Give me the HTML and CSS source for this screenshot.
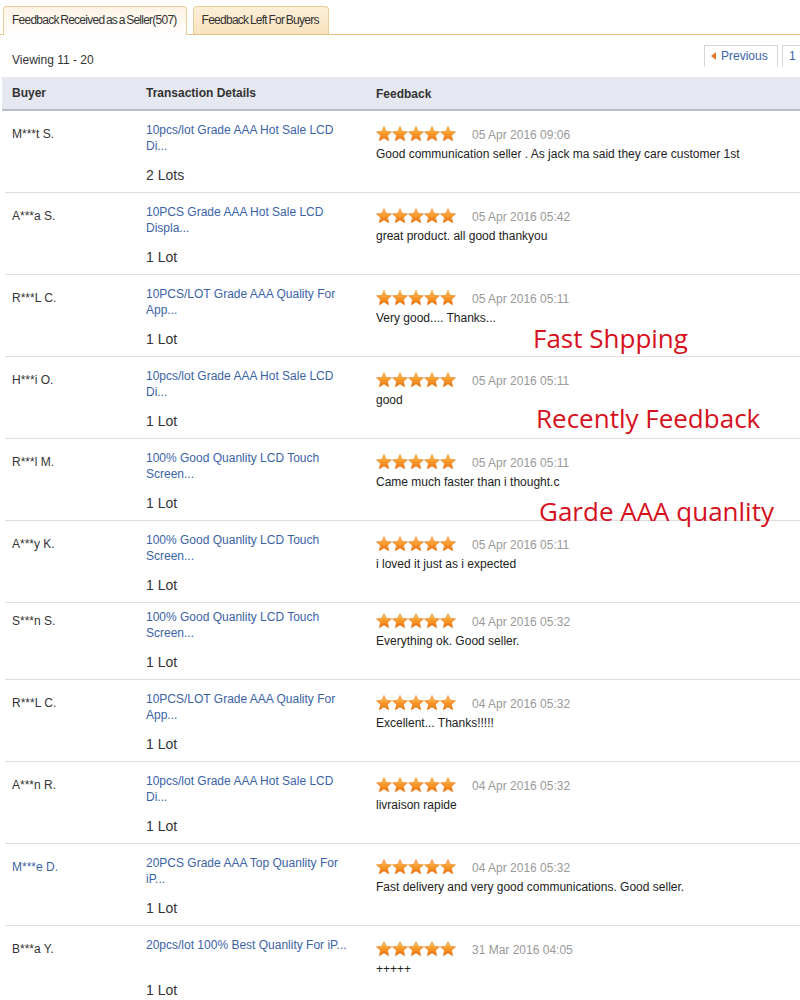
FILE: index.html
```html
<!DOCTYPE html>
<html>
<head>
<meta charset="utf-8">
<link rel="stylesheet" href="styles.css">
</head>
<body>
<svg class="defs" width="0" height="0" aria-hidden="true">
  <defs>
    <linearGradient id="sg" x1="0" y1="0" x2="0" y2="1">
      <stop offset="0" stop-color="#ffc35c"/>
      <stop offset="0.5" stop-color="#f99a2c"/>
      <stop offset="1" stop-color="#ea6f0e"/>
    </linearGradient>
    <symbol id="star" viewBox="0 0 16 16">
      <polygon points="8,0.4 10.2,5.3 15.6,5.8 11.5,9.4 12.8,14.9 8,12 3.2,14.9 4.5,9.4 0.4,5.8 5.8,5.3" fill="url(#sg)" stroke="#e07a1a" stroke-width="0.5"/>
    </symbol>
    <symbol id="stars" viewBox="0 0 80 16">
      <use href="#star" x="0" y="0" width="16" height="16"/>
      <use href="#star" x="16" y="0" width="16" height="16"/>
      <use href="#star" x="32" y="0" width="16" height="16"/>
      <use href="#star" x="48" y="0" width="16" height="16"/>
      <use href="#star" x="64" y="0" width="16" height="16"/>
    </symbol>
  </defs>
</svg>

<div class="tabs">
  <div class="tab active">Feedback Received as a Seller(507)</div>
  <div class="tab">Feedback Left For Buyers</div>
</div>

<div class="toolbar">
  <span class="viewing">Viewing 11 - 20</span>
  <div class="pager">
    <span class="pbtn prev"><span class="tri"></span>Previous</span>
    <span class="pbtn num">1</span>
  </div>
</div>

<div class="table">
  <div class="thead">
    <div class="c1">Buyer</div>
    <div class="c2">Transaction Details</div>
    <div class="c3">Feedback</div>
  </div>

  <div class="row">
    <div class="c1 buyer">M***t S.</div>
    <div class="c2"><a class="prod">10pcs/lot Grade AAA Hot Sale LCD Di...</a><div class="lot">2 Lots</div></div>
    <div class="c3"><div class="rate"><svg class="stars"><use href="#stars"/></svg><span class="date">05 Apr 2016 09:06</span></div><div class="comment">Good communication seller . As jack ma said they care customer 1st</div></div>
  </div>

  <div class="row">
    <div class="c1 buyer">A***a S.</div>
    <div class="c2"><a class="prod">10PCS Grade AAA Hot Sale LCD Displa...</a><div class="lot">1 Lot</div></div>
    <div class="c3"><div class="rate"><svg class="stars"><use href="#stars"/></svg><span class="date">05 Apr 2016 05:42</span></div><div class="comment">great product. all good thankyou</div></div>
  </div>

  <div class="row">
    <div class="c1 buyer">R***L C.</div>
    <div class="c2"><a class="prod">10PCS/LOT Grade AAA Quality For App...</a><div class="lot">1 Lot</div></div>
    <div class="c3"><div class="rate"><svg class="stars"><use href="#stars"/></svg><span class="date">05 Apr 2016 05:11</span></div><div class="comment">Very good.... Thanks...</div></div>
  </div>

  <div class="row">
    <div class="c1 buyer">H***i O.</div>
    <div class="c2"><a class="prod">10pcs/lot Grade AAA Hot Sale LCD Di...</a><div class="lot">1 Lot</div></div>
    <div class="c3"><div class="rate"><svg class="stars"><use href="#stars"/></svg><span class="date">05 Apr 2016 05:11</span></div><div class="comment">good</div></div>
  </div>

  <div class="row">
    <div class="c1 buyer">R***l M.</div>
    <div class="c2"><a class="prod">100% Good Quanlity LCD Touch Screen...</a><div class="lot">1 Lot</div></div>
    <div class="c3"><div class="rate"><svg class="stars"><use href="#stars"/></svg><span class="date">05 Apr 2016 05:11</span></div><div class="comment">Came much faster than i thought.c</div></div>
  </div>

  <div class="row">
    <div class="c1 buyer">A***y K.</div>
    <div class="c2"><a class="prod">100% Good Quanlity LCD Touch Screen...</a><div class="lot">1 Lot</div></div>
    <div class="c3"><div class="rate"><svg class="stars"><use href="#stars"/></svg><span class="date">05 Apr 2016 05:11</span></div><div class="comment">i loved it just as i expected</div></div>
  </div>

  <div class="row short">
    <div class="c1 buyer">S***n S.</div>
    <div class="c2"><a class="prod">100% Good Quanlity LCD Touch Screen...</a><div class="lot">1 Lot</div></div>
    <div class="c3"><div class="rate"><svg class="stars"><use href="#stars"/></svg><span class="date">04 Apr 2016 05:32</span></div><div class="comment">Everything ok. Good seller.</div></div>
  </div>

  <div class="row">
    <div class="c1 buyer">R***L C.</div>
    <div class="c2"><a class="prod">10PCS/LOT Grade AAA Quality For App...</a><div class="lot">1 Lot</div></div>
    <div class="c3"><div class="rate"><svg class="stars"><use href="#stars"/></svg><span class="date">04 Apr 2016 05:32</span></div><div class="comment">Excellent... Thanks!!!!!</div></div>
  </div>

  <div class="row">
    <div class="c1 buyer">A***n R.</div>
    <div class="c2"><a class="prod">10pcs/lot Grade AAA Hot Sale LCD Di...</a><div class="lot">1 Lot</div></div>
    <div class="c3"><div class="rate"><svg class="stars"><use href="#stars"/></svg><span class="date">04 Apr 2016 05:32</span></div><div class="comment">livraison rapide</div></div>
  </div>

  <div class="row">
    <div class="c1 buyer linked">M***e D.</div>
    <div class="c2"><a class="prod">20PCS Grade AAA Top Quanlity For iP...</a><div class="lot">1 Lot</div></div>
    <div class="c3"><div class="rate"><svg class="stars"><use href="#stars"/></svg><span class="date">04 Apr 2016 05:32</span></div><div class="comment">Fast delivery and very good communications. Good seller.</div></div>
  </div>

  <div class="row">
    <div class="c1 buyer">B***a Y.</div>
    <div class="c2"><a class="prod">20pcs/lot 100% Best Quanlity For iP...</a><div class="lot">1 Lot</div></div>
    <div class="c3"><div class="rate"><svg class="stars"><use href="#stars"/></svg><span class="date">31 Mar 2016 04:05</span></div><div class="comment">+++++</div></div>
  </div>

  <div class="promo p1">Fast Shpping</div>
  <div class="promo p2">Recently Feedback</div>
  <div class="promo p3">Garde AAA quanlity</div>
</div>
</body>
</html>
```

FILE: styles.css
```css
html, body {
  margin: 0;
  padding: 0;
  background: #fff;
}
body {
  font-family: "Liberation Sans", Arial, sans-serif;
  font-size: 12px;
  color: #333;
  width: 800px;
  overflow: hidden;
}
.defs {
  position: absolute;
  width: 0;
  height: 0;
  overflow: hidden;
}

/* tabs */
.tabs {
  display: flex;
  gap: 6px;
  padding: 6px 0 0 3px;
  border-bottom: 1px solid #e6c385;
  height: 28px;
}
.tab {
  height: 28px;
  box-sizing: border-box;
  border: 1px solid #e9cd98;
  border-bottom: none;
  border-radius: 4px 4px 0 0;
  background: linear-gradient(#fdefd8, #f9e2bf);
  padding: 0 9px 0 8px;
  line-height: 27px;
  font-size: 12px;
  letter-spacing: -0.75px;
  word-spacing: -1px;
  color: #333;
}
.tab.active {
  background: linear-gradient(#fcf3e3, #ffffff);
  height: 29px;
  margin-bottom: -1px;
}

/* toolbar */
.toolbar {
  display: flex;
  justify-content: space-between;
  align-items: flex-start;
  height: 42px;
  box-sizing: border-box;
  padding: 10px 0 0 12px;
}
.viewing {
  line-height: 30px;
  font-size: 12px;
  color: #333;
}
.pager {
  display: flex;
  gap: 4px;
  margin-right: -8px;
}
.pbtn {
  height: 22px;
  box-sizing: border-box;
  border: 1px solid #d6d6d6;
  border-bottom-color: #fff;
  line-height: 20px;
  color: #3a63a6;
  font-size: 12px;
  background: #fff;
}
.prev {
  width: 74px;
  padding-left: 6px;
  display: flex;
  align-items: center;
}
.tri {
  width: 0;
  height: 0;
  border-top: 4px solid transparent;
  border-bottom: 4px solid transparent;
  border-right: 5px solid #e2772a;
  margin-right: 5px;
}
.num {
  width: 26px;
  padding-left: 6px;
}

/* table */
.table {
  position: relative;
  margin-left: 2px;
}
.thead {
  display: grid;
  grid-template-columns: 144px 230px 1fr;
  height: 32px;
  background: #e6e8f1;
  border-bottom: 2px solid #b9bccc;
  font-weight: bold;
  font-size: 12px;
  line-height: 32px;
  color: #333;
}
.thead .c1 { padding-left: 10px; }
.thead .c3 { padding-top: 1px; }

.row {
  display: grid;
  grid-template-columns: 144px 230px 1fr;
  padding: 11px 0 8px 0;
  margin-left: 3px;
  border-bottom: 1px solid #dedede;
}
.row .c1 { margin-left: -3px; }
.row .c2 { margin-left: -3px; }
.row .c3 { margin-left: -3px; }
.row.short { padding-top: 6px; }

.buyer {
  padding-left: 10px;
  margin-top: 4px;
  line-height: 16px;
  color: #333;
}
.buyer.linked { color: #3a63a6; }

.prod {
  display: block;
  height: 32px;
  line-height: 16px;
  color: #3a63a6;
  text-decoration: none;
  padding-right: 24px;
}
.lot {
  margin-top: 12px;
  line-height: 18px;
  font-size: 14px;
  color: #333;
}
.rate {
  display: flex;
  align-items: center;
  height: 20px;
  margin-top: 2px;
}
.stars {
  width: 80px;
  height: 16px;
  display: block;
}
.date {
  margin-left: 16px;
  color: #999;
  font-size: 12px;
  line-height: 16px;
  margin-top: 1px;
}
.comment {
  margin-top: 2px;
  line-height: 16px;
  color: #222;
}

.promo {
  position: absolute;
  font-family: "Open Sans", "Noto Sans", sans-serif;
  font-size: 26px;
  color: #d6101c;
  line-height: 30px;
  white-space: nowrap;
}
.p1 { left: 531px; top: 246px; }
.p2 { left: 534px; top: 326px; }
.p3 { left: 537px; top: 419px; }
```
